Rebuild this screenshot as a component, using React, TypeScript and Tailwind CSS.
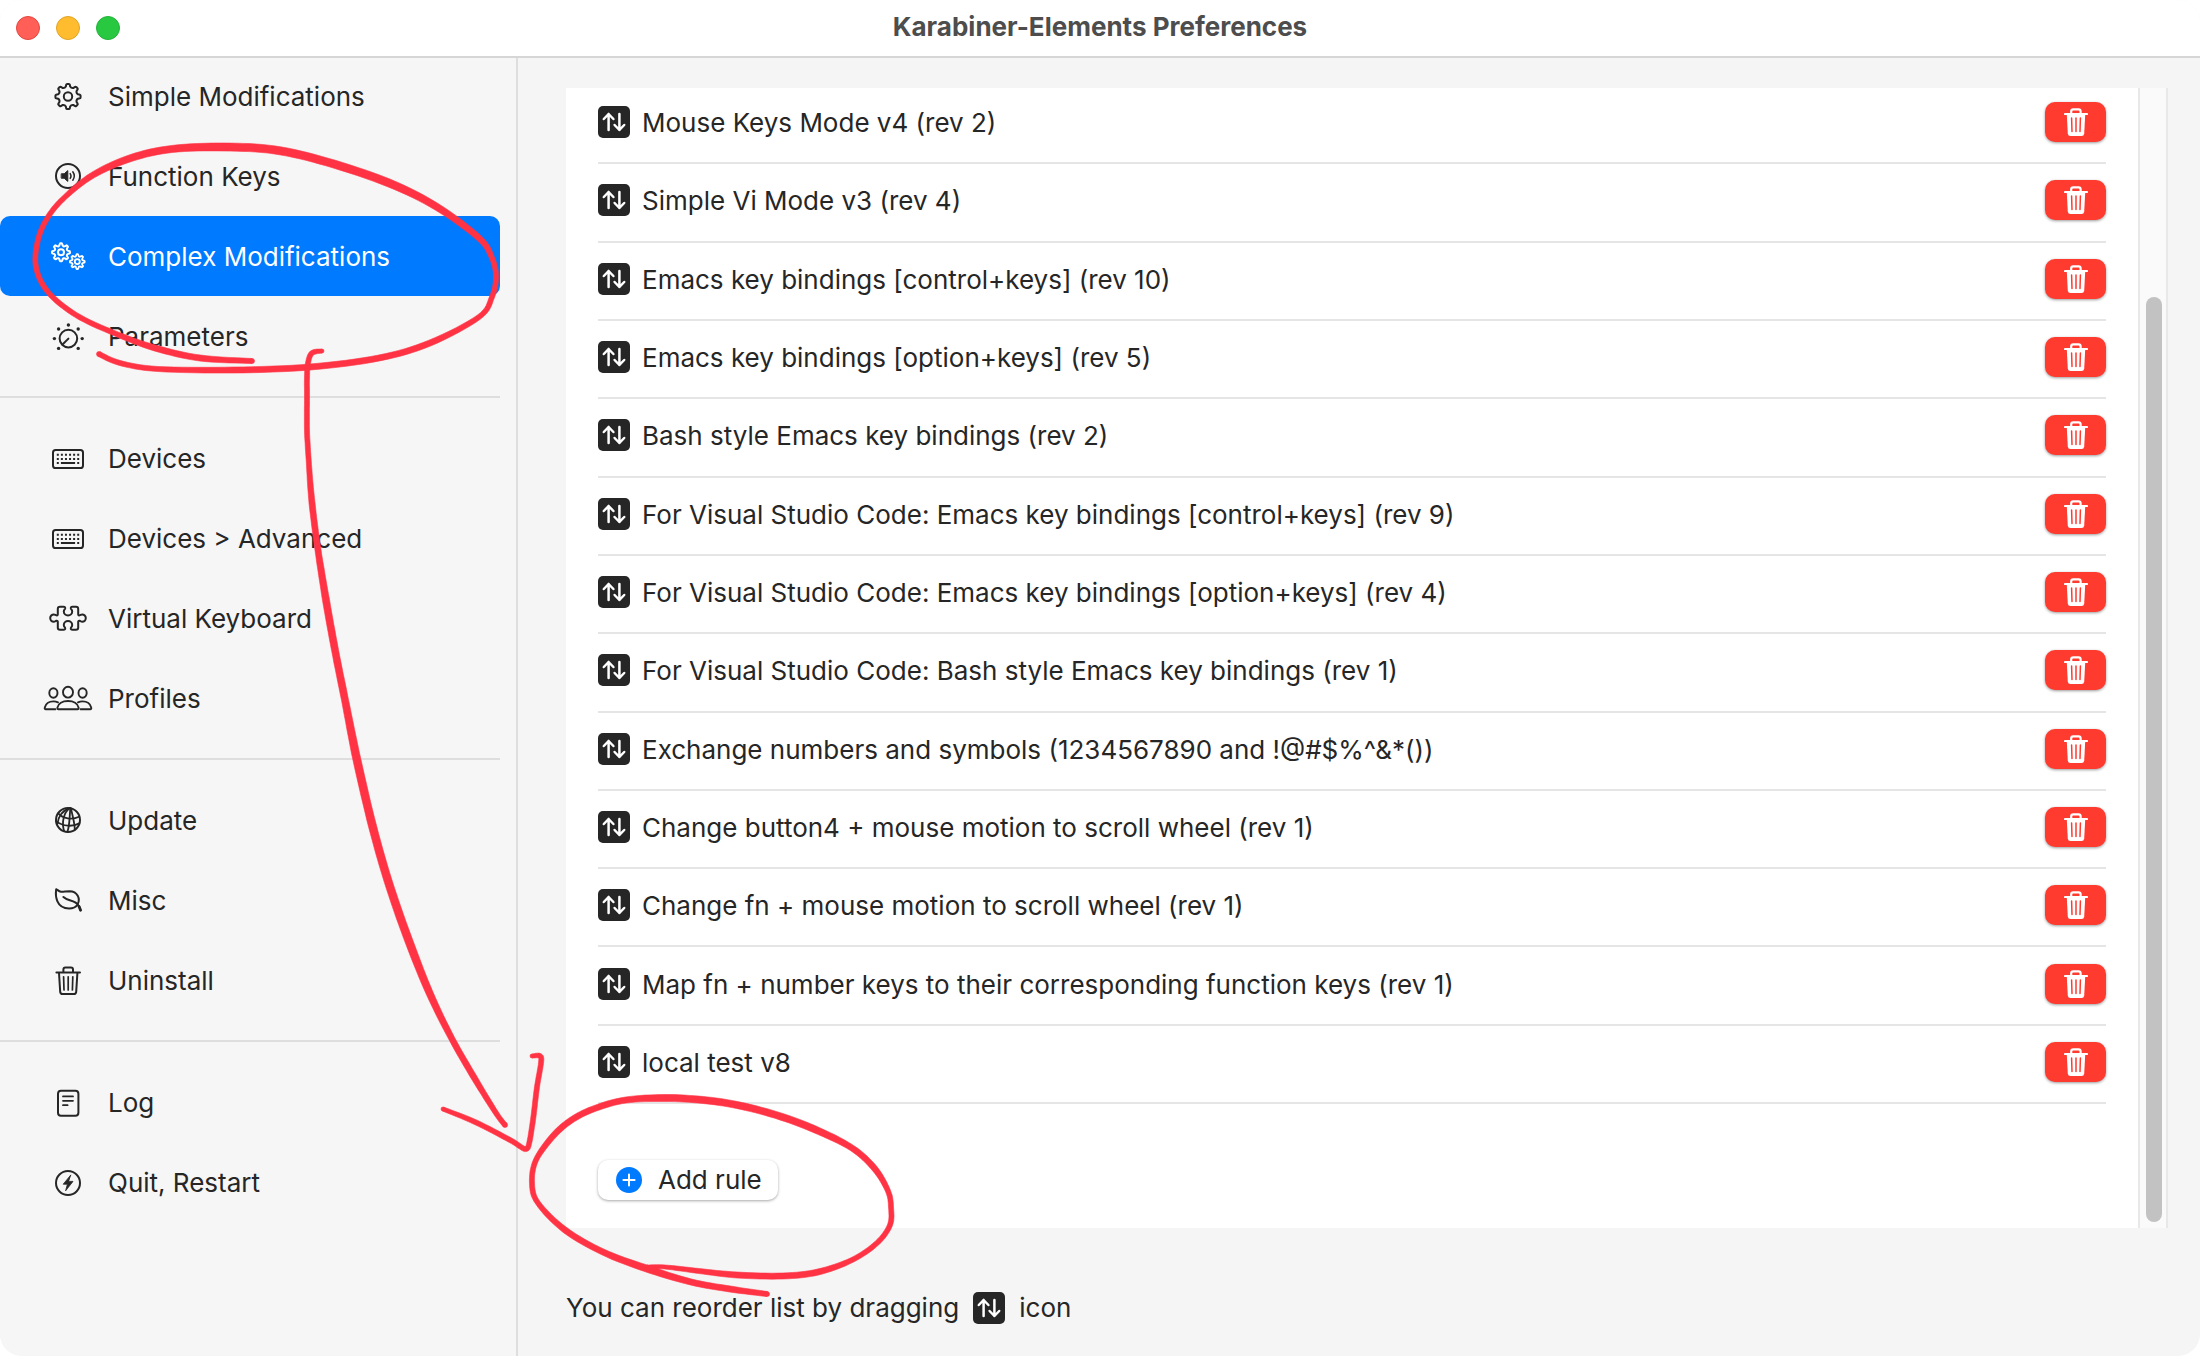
import type { ReactNode } from "react";

/* ---------- icons ---------- */

function gearPath(cx: number, cy: number, outer: number, inner: number, teeth: number): string {
  const step = (Math.PI * 2) / teeth;
  const at = (r: number, a: number) =>
    `${(cx + r * Math.sin(a)).toFixed(2)} ${(cy - r * Math.cos(a)).toFixed(2)}`;
  let d = "";
  for (let i = 0; i < teeth; i++) {
    const a = i * step;
    d += `${i === 0 ? "M" : "L"}${at(inner + 0.6, a - step * 0.27)}`;
    d += `L${at(outer - 0.6, a - step * 0.19)}`;
    d += `Q${at(outer, a - step * 0.16)} ${at(outer, a - step * 0.08)}`;
    d += `L${at(outer, a + step * 0.08)}`;
    d += `Q${at(outer, a + step * 0.16)} ${at(outer - 0.6, a + step * 0.19)}`;
    d += `L${at(inner + 0.6, a + step * 0.27)}`;
    d += `Q${at(inner - 0.9, a + step * 0.5)} ${at(inner + 0.6, a + step * 0.73)}`;
  }
  return d + "Z";
}

function NavIcon({ children }: { children: ReactNode }) {
  return (
    <svg
      className="h-10 w-[52px] shrink-0"
      viewBox="-26 -20 52 40"
      fill="none"
      stroke="currentColor"
      strokeWidth="2"
      strokeLinecap="round"
      strokeLinejoin="round"
      aria-hidden="true"
    >
      {children}
    </svg>
  );
}

const GearIcon = () => (
  <NavIcon>
    <path d={gearPath(0, 0.5, 12.6, 9.6, 8)} />
    <circle cx="0" cy="0.5" r="4.2" />
  </NavIcon>
);

const SpeakerIcon = () => (
  <NavIcon>
    <circle cx="0" cy="0" r="12" />
    <path d="M-6.4 -2.2h2.6l3.6 -3.2v10.8l-3.6 -3.2h-2.6z" fill="currentColor" strokeWidth="1" />
    <path d="M2.2 -2.4q1.6 2.4 0 4.8M4.8 -4.2q3 4.2 0 8.4" strokeWidth="1.5" />
  </NavIcon>
);

const GearsIcon = () => (
  <NavIcon>
    <path d={gearPath(-7, -3.7, 9, 6.7, 8)} />
    <circle cx="-7" cy="-3.7" r="3" />
    <path d={gearPath(9.3, 5.6, 7.4, 5.4, 8)} strokeWidth="1.8" />
    <circle cx="9.3" cy="5.6" r="2.5" strokeWidth="1.8" />
  </NavIcon>
);

const DialIcon = () => (
  <NavIcon>
    <circle cx="0.4" cy="2.6" r="8.8" />
    <path d="M0.4 2.6L-5 8" />
    <g fill="currentColor" stroke="none">
      <circle cx="0.4" cy="-11" r="1.7" />
      <circle cx="-9.4" cy="-7" r="1.7" />
      <circle cx="10.2" cy="-7" r="1.7" />
      <circle cx="-13.6" cy="2.6" r="1.7" />
      <circle cx="14.2" cy="2.6" r="1.7" />
      <circle cx="-9.4" cy="12.4" r="1.7" />
      <circle cx="10.2" cy="12.4" r="1.7" />
    </g>
  </NavIcon>
);

const KeyboardIcon = () => (
  <NavIcon>
    <rect x="-15" y="-8" width="30" height="18" rx="2.6" />
    <g strokeWidth="2" strokeLinecap="butt">
      <path d="M-11.2 -3.2h22.4M-11.2 0.9h22.4" strokeDasharray="2 2.08" />
      <path d="M-11.2 5h2M9.2 5h2M-7.1 5h14.2" />
    </g>
  </NavIcon>
);

const PuzzleIcon = () => (
  <NavIcon>
    <path d="M-8 -11.3H-4.4Q-2.6 -11.3 -2.8 -9.6C-3 -8.6 -4.2 -8.4 -4.2 -6.6A4.2 4 0 0 0 4.2 -6.6C4.2 -8.4 3 -8.6 2.8 -9.6Q2.6 -11.3 4.4 -11.3H8Q10.2 -11.3 10.2 -9.2V-3.8Q10.2 -2.2 11.6 -2.6C12.6 -2.9 13 -3.6 14.2 -3.6A3.6 3.7 0 0 1 14.2 3.8C13 3.8 12.6 3 11.6 2.7Q10.2 2.4 10.2 4V9.8Q10.2 11.8 8 11.8H4.4Q2.6 11.8 2.8 10.1C3 9.1 4.2 8.9 4.2 7.1A4.2 4 0 0 0 -4.2 7.1C-4.2 8.9 -3 9.1 -2.8 10.1Q-2.6 11.8 -4.4 11.8H-8Q-10.2 11.8 -10.2 9.8V4Q-10.2 2.4 -11.6 2.7C-12.6 3 -13 3.8 -14.2 3.8A3.6 3.7 0 0 1 -14.2 -3.6C-13 -3.6 -12.6 -2.9 -11.6 -2.6Q-10.2 -2.2 -10.2 -3.8V-9.2Q-10.2 -11.3 -8 -11.3Z" />
  </NavIcon>
);

const PeopleIcon = () => (
  <NavIcon>
    <g strokeWidth="1.9">
      <ellipse cx="0" cy="-5.8" rx="5" ry="5.4" />
      <path d="M-9.6 11.2H9.6Q10.8 11.2 10.6 9.6C9.8 5.6 5.6 3 0 3S-9.8 5.6 -10.6 9.6Q-10.8 11.2 -9.6 11.2Z" />
      <ellipse cx="-14.6" cy="-5" rx="4.1" ry="4.7" />
      <ellipse cx="14.6" cy="-5" rx="4.1" ry="4.7" />
      <path d="M-12.6 11.2H-22.2Q-23.6 11.2 -23.2 9.4C-22.2 5.8 -19 3.4 -14.6 3.4Q-12 3.4 -10 4.3" />
      <path d="M12.6 11.2H22.2Q23.6 11.2 23.2 9.4C22.2 5.8 19 3.4 14.6 3.4Q12 3.4 10 4.3" />
    </g>
  </NavIcon>
);

const GlobeIcon = () => (
  <NavIcon>
    <circle cx="0" cy="0" r="12" />
    <g strokeWidth="1.8">
      <path d="M-9.8 -6.6C-5 -1.4 4 0.4 11 -3.2" />
      <path d="M-11.8 1.4C-5 6.6 5 7 11.2 3.4" />
      <path d="M1.8 -11.8C-4 -8 -6.8 2 -3.8 11.2" />
      <path d="M2.4 -11.8C1.4 -5 2 5 -0.6 11.8" />
      <path d="M3 -11.6C4.4 -4 6.6 2 6.8 9.6" />
      <path d="M1.4 -11.8C-4.6 -9.6 -9.6 -4 -10.6 4" />
    </g>
  </NavIcon>
);

const LeafIcon = () => (
  <NavIcon>
    <path d="M-11.8 -10.8C-12.8 -4 -11.8 8.4 1 8.4C5.6 8.4 8.4 6.4 9.6 4.4C12.6 -1.4 9.6 -8.6 1.6 -8.8C-2.4 -8.8 -4.4 -7.8 -7 -8.2C-9.4 -8.6 -10.4 -10.2 -11.8 -10.8Z" />
    <path d="M-4.6 -3C0 1.4 6.6 -0.4 10 4.8Q12 7.4 12.4 10" />
    <path d="M11 6.4L12.6 10.2" strokeWidth="2.8" />
  </NavIcon>
);

const TrashIcon = () => (
  <NavIcon>
    <path d="M-11.6 -7.4H12M-4.6 -7.8V-10.4Q-4.6 -12.4 -2.6 -12.4H3Q5 -12.4 5 -10.4V-7.8" />
    <path d="M-9 -7L-7.8 11.8Q-7.6 14 -5.4 14H5.8Q8 14 8.2 11.8L9.4 -7" />
    <path d="M-4.4 -3.2L-4 10M0.2 -3.2V10M4.8 -3.2L4.4 10" strokeWidth="1.7" />
  </NavIcon>
);

const LogIcon = () => (
  <NavIcon>
    <rect x="-10" y="-11.2" width="20.4" height="25" rx="3" />
    <path d="M-5 -5.6H5M-5 -1.2H5M-5 3.2H-0.4" strokeWidth="1.8" />
  </NavIcon>
);

const BoltIcon = () => (
  <NavIcon>
    <circle cx="0" cy="1" r="12" />
    <path d="M2.6 -6.8L-4.8 2.2H-0.6L-2.4 8.8L5 -0.6H0.8Z" fill="currentColor" strokeWidth="0.8" />
  </NavIcon>
);

function ReorderIcon() {
  return (
    <svg
      className="size-8 shrink-0 rounded-[5px] bg-[#262626]"
      viewBox="0 0 32 32"
      fill="none"
      stroke="#ffffff"
      strokeWidth="2.5"
      strokeLinecap="round"
      strokeLinejoin="round"
      aria-hidden="true"
    >
      <path d="M10.6 24V8M5.8 13L10.6 8L15.4 13" />
      <path d="M21.4 8V24M16.6 19L21.4 24L26.2 19" />
    </svg>
  );
}

function TrashFilledIcon() {
  return (
    <svg className="h-7 w-6" viewBox="0 0 24 28" fill="none" aria-hidden="true">
      <path d="M1 6H23M7.2 6V3.4Q7.2 1.4 9.2 1.4H14.6Q16.6 1.4 16.6 3.4V6" stroke="#ffffff" strokeWidth="2.2" strokeLinecap="round" />
      <path d="M2.8 6.5H21.2L20.2 25.4Q20 28 17.6 28H6.4Q4 28 3.8 25.4Z" fill="#ffffff" />
      <path d="M7.6 10L8 23.6M12 10V23.6M16.4 10L16 23.6" stroke="#ff3b30" strokeWidth="1.5" strokeLinecap="round" />
    </svg>
  );
}

function PlusCircleIcon() {
  return (
    <svg className="size-[26px]" viewBox="0 0 26 26" fill="none" aria-hidden="true">
      <circle cx="13" cy="13" r="13" fill="#007aff" />
      <path d="M13 7.4V18.6M7.4 13H18.6" stroke="#ffffff" strokeWidth="2" strokeLinecap="round" />
    </svg>
  );
}

/* ---------- sidebar ---------- */

type NavItem = { label: string; icon: () => ReactNode; selected?: boolean };

const navGroups: NavItem[][] = [
  [
    { label: "Simple Modifications", icon: GearIcon },
    { label: "Function Keys", icon: SpeakerIcon },
    { label: "Complex Modifications", icon: GearsIcon, selected: true },
    { label: "Parameters", icon: DialIcon },
  ],
  [
    { label: "Devices", icon: KeyboardIcon },
    { label: "Devices > Advanced", icon: KeyboardIcon },
    { label: "Virtual Keyboard", icon: PuzzleIcon },
    { label: "Profiles", icon: PeopleIcon },
  ],
  [
    { label: "Update", icon: GlobeIcon },
    { label: "Misc", icon: LeafIcon },
    { label: "Uninstall", icon: TrashIcon },
  ],
  [
    { label: "Log", icon: LogIcon },
    { label: "Quit, Restart", icon: BoltIcon },
  ],
];

function Sidebar() {
  return (
    <nav className="w-[518px] shrink-0 border-r-2 border-[#dedede] bg-[#f6f6f6] pr-4">
      {navGroups.map((group, index) => (
        <ul
          key={index}
          className={
            index === 0
              ? "-mt-0.5 pb-5"
              : "border-t-2 border-[#dedede] py-5"
          }
        >
          {group.map(({ label, icon: Icon, selected }) => (
            <li key={label}>
              <button
                type="button"
                aria-current={selected ? "page" : undefined}
                className={
                  selected
                    ? "flex h-20 w-full items-center gap-[14px] rounded-[10px] bg-[#007aff] pl-[42px] text-left text-white"
                    : "flex h-20 w-full items-center gap-[14px] pl-[42px] text-left"
                }
              >
                <Icon />
                <span className="pt-0.5">{label}</span>
              </button>
            </li>
          ))}
        </ul>
      ))}
    </nav>
  );
}

/* ---------- rules ---------- */

const rules = [
  "Mouse Keys Mode v4 (rev 2)",
  "Simple Vi Mode v3 (rev 4)",
  "Emacs key bindings [control+keys] (rev 10)",
  "Emacs key bindings [option+keys] (rev 5)",
  "Bash style Emacs key bindings (rev 2)",
  "For Visual Studio Code: Emacs key bindings [control+keys] (rev 9)",
  "For Visual Studio Code: Emacs key bindings [option+keys] (rev 4)",
  "For Visual Studio Code: Bash style Emacs key bindings (rev 1)",
  "Exchange numbers and symbols (1234567890 and !@#$%^&*())",
  "Change button4 + mouse motion to scroll wheel (rev 1)",
  "Change fn + mouse motion to scroll wheel (rev 1)",
  "Map fn + number keys to their corresponding function keys (rev 1)",
  "local test v8",
];

function RulePanel() {
  return (
    <section className="flex flex-1 overflow-hidden">
      <div className="flex flex-1 flex-col bg-white px-8">
        <ul className="-mt-0.5 flex flex-1 flex-col">
          {rules.map((rule) => (
            <li key={rule} className="flex min-h-16 flex-1 items-center gap-3 border-b-2 border-[#e5e5e5] pb-1">
              <ReorderIcon />
              <span className="flex-1 pt-0.5">{rule}</span>
              <button
                type="button"
                aria-label={`Delete ${rule}`}
                className="flex h-10 w-[61px] items-center justify-center rounded-[10px] bg-[#ff3b30] shadow-[0_1px_3px_rgba(0,0,0,0.4)]"
              >
                <TrashFilledIcon />
              </button>
            </li>
          ))}
        </ul>
        <div className="pt-14 pb-7">
          <button
            type="button"
            className="flex h-10 items-center gap-4 rounded-[10px] bg-white pr-4 pl-[18px] shadow-[0_1px_3px_rgba(0,0,0,0.35)]"
          >
            <PlusCircleIcon />
            <span>Add rule</span>
          </button>
        </div>
      </div>
      <div className="flex w-[30px] flex-col border-x-2 border-[#e8e8e8] bg-[#fafafa] px-[6px] pt-[209px] pb-[6px]">
        <div className="w-4 flex-1 rounded-full bg-[#c2c2c2]" />
      </div>
    </section>
  );
}

/* ---------- hand-drawn marks ---------- */

type Mark = [x: number, y: number, width: number][];

const marks: Mark[] = [
  [
    [99, 354, 5], [120, 363, 5], [158, 369, 5], [234, 370, 6], [310, 367, 6], [379, 358, 6], [430, 343, 6],
    [479, 317, 5], [492, 297, 5], [496, 277, 5], [492, 258, 5], [479, 238, 6], [437, 207, 7], [389, 183, 8],
    [327, 162, 8], [275, 150, 8], [224, 147, 8], [172, 149, 7], [131, 158, 7], [93, 175, 6], [65, 197, 5],
    [48, 217, 5], [38, 240, 5], [36, 267, 5], [48, 292, 5], [76, 315, 5], [114, 333, 5], [155, 348, 6],
    [200, 358, 6], [252, 361, 5],
  ],
  [
    [322, 351, 4], [312, 353, 5], [308, 363, 5], [307, 377, 5], [307, 397, 5], [307, 430, 5], [309, 465, 5],
    [312, 503, 6], [318, 550, 6], [326, 600, 7], [335, 650, 7], [345, 700, 7], [357, 760, 8], [373, 828, 8],
    [390, 887, 8], [410, 944, 8], [430, 994, 7], [452, 1039, 6], [475, 1079, 6], [496, 1113, 5], [505, 1125, 5],
  ],
  [
    [443, 1109, 4], [475, 1122, 5], [510, 1140, 5], [521, 1147, 5], [526, 1149, 5], [529, 1144, 5],
    [533, 1120, 5], [537, 1087, 5], [541, 1063, 5], [540, 1056, 5], [532, 1056, 4],
  ],
  [
    [767, 1294, 5], [730, 1289, 6], [691, 1282, 6], [645, 1268, 7], [603, 1252, 6], [565, 1230, 6],
    [538, 1203, 5], [532, 1183, 5], [536, 1160, 5], [554, 1135, 6], [573, 1119, 6], [596, 1108, 6],
    [626, 1100, 6], [665, 1098, 7], [703, 1100, 7], [737, 1105, 7], [776, 1115, 7], [814, 1129, 7],
    [852, 1148, 6], [875, 1169, 6], [888, 1191, 5], [891, 1207, 5], [890, 1225, 5], [877, 1243, 5],
    [852, 1260, 5], [818, 1272, 6], [783, 1276, 6], [737, 1275, 6], [699, 1271, 5], [665, 1267, 4],
    [647, 1267, 4],
  ],
];

/** Outline of a brush stroke that follows a smooth curve through the points, with a varying width. */
function brushOutline(points: Mark): string {
  const steps = 8;
  const samples: Mark = [];
  const pick = (i: number) => points[Math.max(0, Math.min(points.length - 1, i))];
  const spline = (a: number, b: number, c: number, d: number, t: number) =>
    0.5 * (2 * b + (c - a) * t + (2 * a - 5 * b + 4 * c - d) * t * t + (3 * b - a - 3 * c + d) * t * t * t);
  for (let i = 0; i < points.length - 1; i++) {
    const [p0, p1, p2, p3] = [pick(i - 1), pick(i), pick(i + 1), pick(i + 2)];
    for (let s = 0; s < steps; s++) {
      const t = s / steps;
      samples.push([
        spline(p0[0], p1[0], p2[0], p3[0], t),
        spline(p0[1], p1[1], p2[1], p3[1], t),
        p1[2] + (p2[2] - p1[2]) * t,
      ]);
    }
  }
  samples.push(points[points.length - 1]);
  const left: string[] = [];
  const right: string[] = [];
  samples.forEach(([x, y, w], i) => {
    const before = samples[Math.max(0, i - 1)];
    const after = samples[Math.min(samples.length - 1, i + 1)];
    const dx = after[0] - before[0];
    const dy = after[1] - before[1];
    const length = Math.hypot(dx, dy) || 1;
    const nx = (-dy / length) * (w / 2);
    const ny = (dx / length) * (w / 2);
    left.push(`${(x + nx).toFixed(1)} ${(y + ny).toFixed(1)}`);
    right.unshift(`${(x - nx).toFixed(1)} ${(y - ny).toFixed(1)}`);
  });
  return `M${left.join("L")}L${right.join("L")}Z`;
}

function Annotations() {
  return (
    <svg
      className="pointer-events-none absolute top-0 left-0"
      width="2200"
      height="1356"
      viewBox="0 0 2200 1356"
      fill="#ff3344"
      stroke="#ff3344"
      strokeWidth="0.6"
      strokeLinejoin="round"
      aria-hidden="true"
    >
      {marks.map((mark, index) => {
        const first = mark[0];
        const last = mark[mark.length - 1];
        return (
          <g key={index}>
            <path d={brushOutline(mark)} />
            <circle cx={first[0]} cy={first[1]} r={first[2] / 2} />
            <circle cx={last[0]} cy={last[1]} r={last[2] / 2} />
          </g>
        );
      })}
    </svg>
  );
}

/* ---------- window ---------- */

export default function App() {
  return (
    <div className="relative flex min-h-screen flex-col overflow-hidden rounded-[22px] bg-[#f5f5f5] font-['Inter','Liberation_Sans',sans-serif] text-[26px] leading-8 text-[#262626]">
      <header className="flex h-[58px] items-center border-b-2 border-[#d6d6d6] bg-white px-4">
        <div className="flex flex-1 gap-4">
          <button type="button" aria-label="Close" className="size-6 rounded-full border border-[#e2463f] bg-[#ff5f57]" />
          <button type="button" aria-label="Minimize" className="size-6 rounded-full border border-[#e1a325] bg-[#febc2e]" />
          <button type="button" aria-label="Zoom" className="size-6 rounded-full border border-[#24b23a] bg-[#28c840]" />
        </div>
        <h1 className="pb-0.5 font-bold text-[#4d4d4d]">Karabiner-Elements Preferences</h1>
        <div className="flex-1" />
      </header>
      <div className="flex flex-1">
        <Sidebar />
        <main className="flex flex-1 flex-col pt-[30px] pr-8 pl-12">
          <RulePanel />
          <p className="mt-16 mb-8 flex items-center gap-[14px]">
            <span>You can reorder list by dragging</span>
            <ReorderIcon />
            <span>icon</span>
          </p>
        </main>
      </div>
      <Annotations />
    </div>
  );
}
